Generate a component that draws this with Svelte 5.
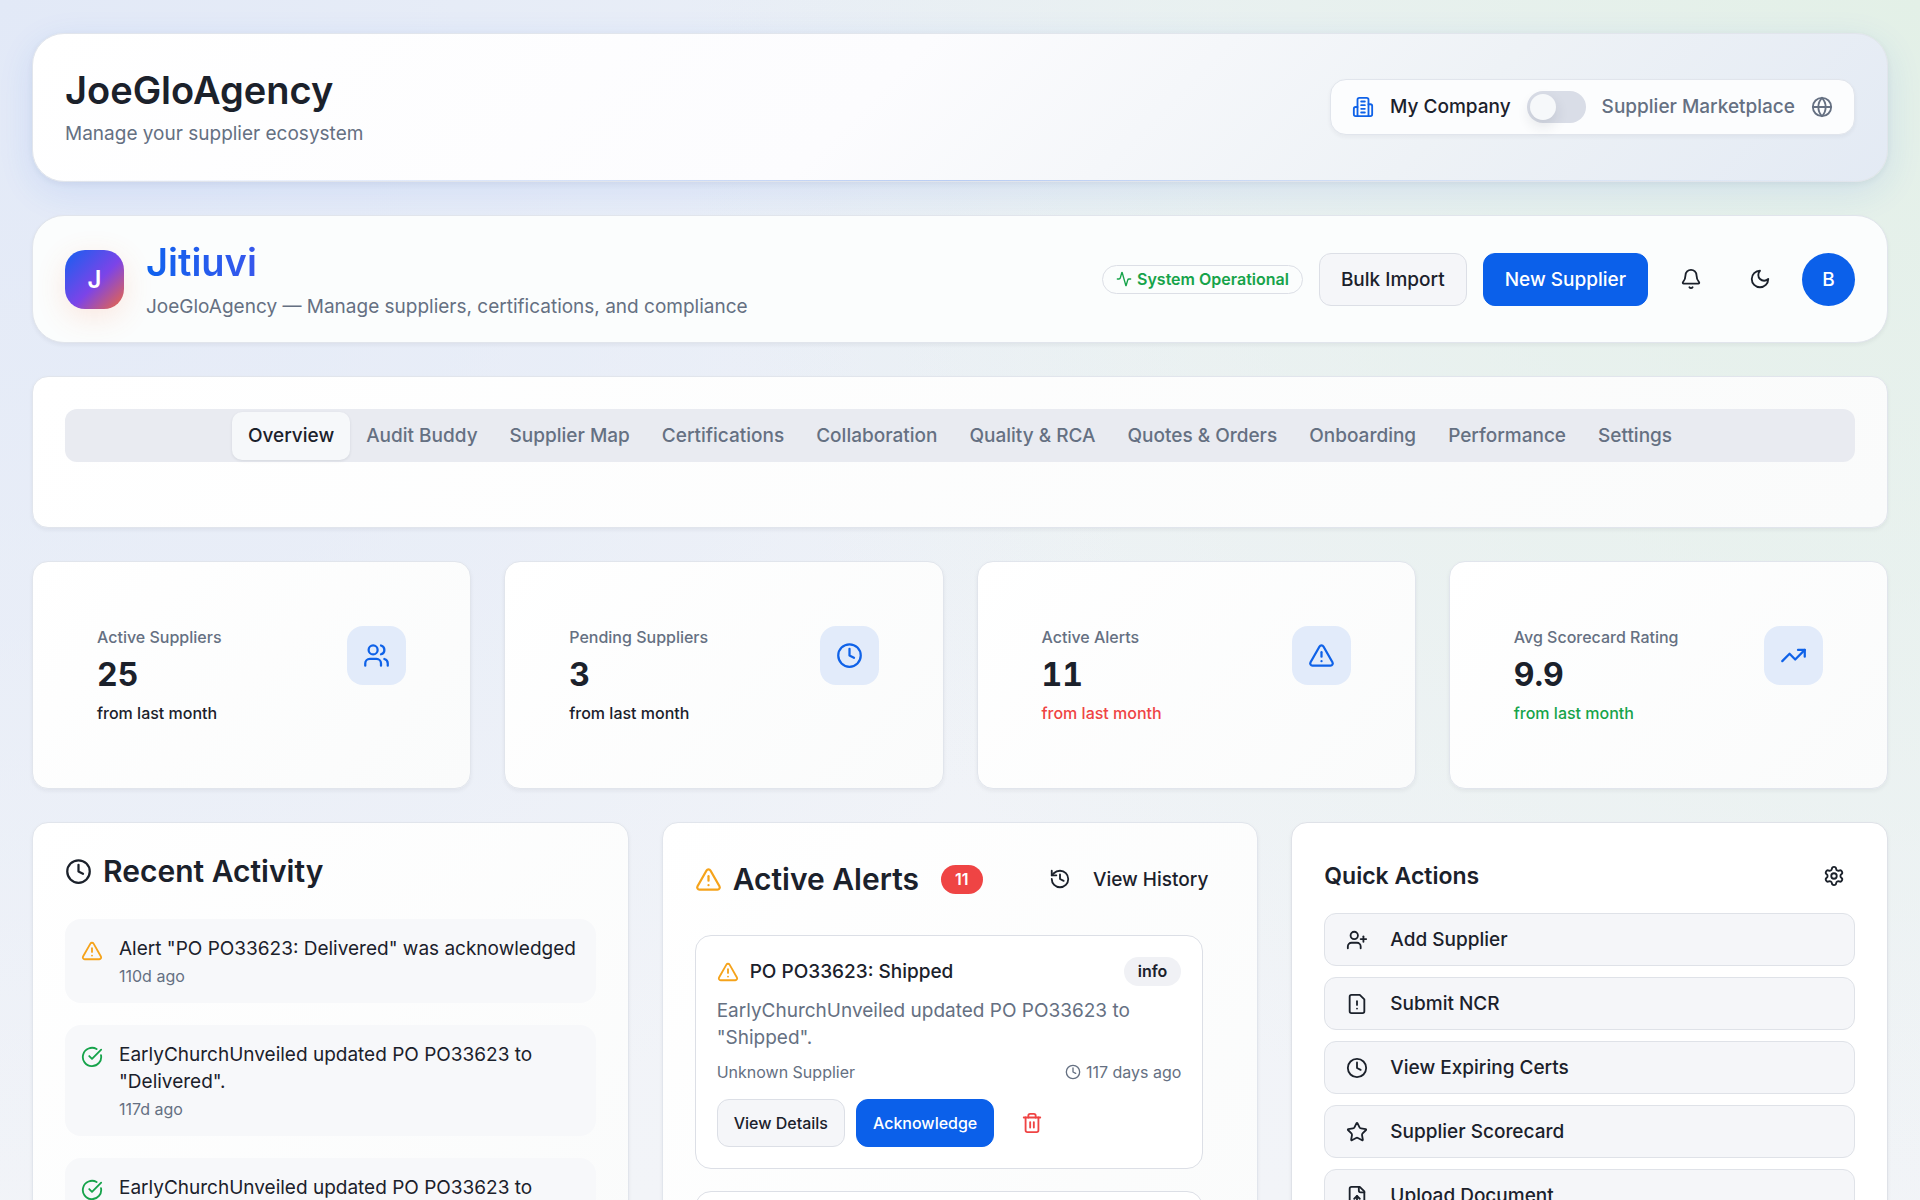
<script>
  const icons = {
    building: [
      'M6 22V4a2 2 0 0 1 2-2h8a2 2 0 0 1 2 2v18Z',
      'M6 12H4a2 2 0 0 0-2 2v6a2 2 0 0 0 2 2h2',
      'M18 9h2a2 2 0 0 1 2 2v9a2 2 0 0 1-2 2h-2',
      'M10 6h4', 'M10 10h4', 'M10 14h4', 'M10 18h4',
    ],
    globe: [
      'M22 12a10 10 0 1 1-20 0a10 10 0 0 1 20 0',
      'M12 2a14.5 14.5 0 0 0 0 20 14.5 14.5 0 0 0 0-20',
      'M2 12h20',
    ],
    activity: [
      'M22 12h-2.48a2 2 0 0 0-1.93 1.46l-2.35 8.36a.25.25 0 0 1-.48 0L9.24 2.18a.25.25 0 0 0-.48 0l-2.35 8.36A2 2 0 0 1 4.49 12H2',
    ],
    bell: [
      'M10.268 21a2 2 0 0 0 3.464 0',
      'M3.262 15.326A1 1 0 0 0 4 17h16a1 1 0 0 0 .74-1.673C19.41 13.956 18 12.499 18 8A6 6 0 0 0 6 8c0 4.499-1.411 5.956-2.738 7.326',
    ],
    moon: ['M12 3a6 6 0 0 0 9 9 9 9 0 1 1-9-9Z'],
    users: [
      'M16 21v-2a4 4 0 0 0-4-4H6a4 4 0 0 0-4 4v2',
      'M13 7a4 4 0 1 1-8 0a4 4 0 0 1 8 0',
      'M22 21v-2a4 4 0 0 0-3-3.87',
      'M16 3.13a4 4 0 0 1 0 7.75',
    ],
    clock: ['M22 12a10 10 0 1 1-20 0a10 10 0 0 1 20 0', 'M12 6v6l4 2'],
    alert: [
      'm21.73 18-8-14a2 2 0 0 0-3.48 0l-8 14A2 2 0 0 0 4 21h16a2 2 0 0 0 1.73-3',
      'M12 9v4', 'M12 17h.01',
    ],
    trending: ['M22 7 13.5 15.5 8.5 10.5 2 17', 'M16 7h6v6'],
    check: ['M21.801 10A10 10 0 1 1 17 3.335', 'm9 11 3 3L22 4'],
    history: [
      'M3 12a9 9 0 1 0 9-9 9.75 9.75 0 0 0-6.74 2.74L3 8',
      'M3 3v5h5', 'M12 7v5l4 2',
    ],
    trash: [
      'M3 6h18',
      'M19 6v14c0 1-1 2-2 2H7c-1 0-2-1-2-2V6',
      'M8 6V4c0-1 1-2 2-2h4c1 0 2 1 2 2v2',
      'M10 11v6', 'M14 11v6',
    ],
    settings: [
      'M9.671 4.136a2.34 2.34 0 0 1 4.659 0 2.34 2.34 0 0 0 3.319 1.915 2.34 2.34 0 0 1 2.33 4.033 2.34 2.34 0 0 0 0 3.831 2.34 2.34 0 0 1-2.33 4.033 2.34 2.34 0 0 0-3.319 1.915 2.34 2.34 0 0 1-4.659 0 2.34 2.34 0 0 0-3.32-1.915 2.34 2.34 0 0 1-2.33-4.033 2.34 2.34 0 0 0 0-3.831A2.34 2.34 0 0 1 6.35 6.051a2.34 2.34 0 0 0 3.319-1.915',
      'M15 12a3 3 0 1 1-6 0a3 3 0 0 1 6 0',
    ],
    userPlus: [
      'M16 21v-2a4 4 0 0 0-4-4H6a4 4 0 0 0-4 4v2',
      'M13 7a4 4 0 1 1-8 0a4 4 0 0 1 8 0',
      'M19 8v6', 'M22 11h-6',
    ],
    fileWarning: [
      'M15 2H6a2 2 0 0 0-2 2v16a2 2 0 0 0 2 2h12a2 2 0 0 0 2-2V7Z',
      'M12 9v4', 'M12 17h.01',
    ],
    star: [
      'M11.525 2.295a.53.53 0 0 1 .95 0l2.31 4.679a2.123 2.123 0 0 0 1.595 1.16l5.166.756a.53.53 0 0 1 .294.904l-3.736 3.638a2.123 2.123 0 0 0-.611 1.878l.882 5.14a.53.53 0 0 1-.771.56l-4.618-2.428a2.122 2.122 0 0 0-1.973 0L6.396 21.01a.53.53 0 0 1-.77-.56l.881-5.139a2.122 2.122 0 0 0-.611-1.879L2.16 9.795a.53.53 0 0 1 .294-.906l5.165-.755a2.122 2.122 0 0 0 1.597-1.16z',
    ],
    fileUp: [
      'M15 2H6a2 2 0 0 0-2 2v16a2 2 0 0 0 2 2h12a2 2 0 0 0 2-2V7Z',
      'M14 2v4a2 2 0 0 0 2 2h4',
      'M12 12v6', 'm15 15-3-3-3 3',
    ],
  };

  const tabs = [
    'Overview', 'Audit Buddy', 'Supplier Map', 'Certifications', 'Collaboration',
    'Quality & RCA', 'Quotes & Orders', 'Onboarding', 'Performance', 'Settings',
  ];

  const stats = [
    { label: 'Active Suppliers', value: '25', tone: 'neutral', icon: 'users' },
    { label: 'Pending Suppliers', value: '3', tone: 'neutral', icon: 'clock' },
    { label: 'Active Alerts', value: '11', tone: 'bad', icon: 'alert' },
    { label: 'Avg Scorecard Rating', value: '9.9', tone: 'good', icon: 'trending' },
  ];

  const activity = [
    { icon: 'alert', text: 'Alert "PO PO33623: Delivered" was acknowledged', time: '110d ago' },
    { icon: 'check', text: 'EarlyChurchUnveiled updated PO PO33623 to "Delivered".', time: '117d ago' },
    { icon: 'check', text: 'EarlyChurchUnveiled updated PO PO33623 to', time: '' },
  ];

  const alerts = [
    {
      title: 'PO PO33623: Shipped',
      text: 'EarlyChurchUnveiled updated PO PO33623 to "Shipped".',
      supplier: 'Unknown Supplier',
      time: '117 days ago',
    },
  ];

  const actions = [
    { icon: 'userPlus', label: 'Add Supplier' },
    { icon: 'fileWarning', label: 'Submit NCR' },
    { icon: 'clock', label: 'View Expiring Certs' },
    { icon: 'star', label: 'Supplier Scorecard' },
    { icon: 'fileUp', label: 'Upload Document' },
  ];

  let activeTab = $state('Overview');
  let marketplace = $state(false);
</script>

{#snippet icon(name, size = 'md')}
  <svg class="icon {size}" viewBox="0 0 24 24" aria-hidden="true">
    {#each icons[name] as d}
      <path {d} />
    {/each}
  </svg>
{/snippet}

<main class="page">
  <header class="card hero">
    <div>
      <h1>JoeGloAgency</h1>
      <p class="muted">Manage your supplier ecosystem</p>
    </div>
    <div class="switcher">
      <span class="blue">{@render icon('building')}</span>
      <label for="mode">My Company</label>
      <input id="mode" class="switch" type="checkbox" role="switch" bind:checked={marketplace} />
      <label for="mode" class="muted">Supplier Marketplace</label>
      <span class="muted">{@render icon('globe')}</span>
    </div>
  </header>

  <section class="card brand">
    <div class="logo">J</div>
    <div class="brand-text">
      <h2 class="brand-name">Jitiuvi</h2>
      <p class="muted">JoeGloAgency — Manage suppliers, certifications, and compliance</p>
    </div>
    <div class="tools">
      <span class="status">{@render icon('activity', 'xs')}System Operational</span>
      <button class="btn">Bulk Import</button>
      <button class="btn primary">New Supplier</button>
      <button class="btn-icon" aria-label="Notifications">{@render icon('bell')}</button>
      <button class="btn-icon" aria-label="Dark mode">{@render icon('moon')}</button>
      <button class="btn-icon avatar">B</button>
    </div>
  </section>

  <nav class="card tabs-card">
    <div class="tabs" role="tablist">
      {#each tabs as tab}
        <button
          class="tab"
          class:active={tab === activeTab}
          role="tab"
          aria-selected={tab === activeTab}
          onclick={() => (activeTab = tab)}>{tab}</button>
      {/each}
    </div>
  </nav>

  <section class="stats">
    {#each stats as stat}
      <div class="card stat">
        <div>
          <p class="stat-label">{stat.label}</p>
          <p class="stat-value">{stat.value}</p>
          <p class="stat-note {stat.tone}">from last month</p>
        </div>
        <div class="stat-icon">{@render icon(stat.icon, 'lg')}</div>
      </div>
    {/each}
  </section>

  <section class="columns">
    <div class="card panel">
      <h2 class="panel-title">{@render icon('clock', 'lg')}Recent Activity</h2>
      <ul class="activity">
        {#each activity as item}
          <li>
            <span class="mark {item.icon}">{@render icon(item.icon)}</span>
            <div>
              <p>{item.text}</p>
              <p class="small muted">{item.time}</p>
            </div>
          </li>
        {/each}
      </ul>
    </div>

    <div class="card panel">
      <div class="panel-head">
        <h2 class="panel-title">
          <span class="mark alert">{@render icon('alert', 'lg')}</span>Active Alerts
          <span class="count">11</span>
        </h2>
        <button class="btn ghost">{@render icon('history')}View History</button>
      </div>
      <div class="alerts">
        {#each alerts as alert}
          <article class="alert-card">
            <div class="alert-head">
              <span class="mark alert">{@render icon('alert')}</span>
              <h3>{alert.title}</h3>
              <span class="tag">info</span>
            </div>
            <p class="muted">{alert.text}</p>
            <div class="meta muted">
              <span>{alert.supplier}</span>
              <span class="when">{@render icon('clock', 'xs')}{alert.time}</span>
            </div>
            <div class="alert-actions">
              <button class="btn compact">View Details</button>
              <button class="btn primary compact">Acknowledge</button>
              <button class="btn-icon danger" aria-label="Delete alert">{@render icon('trash')}</button>
            </div>
          </article>
        {/each}
        <article class="alert-card"></article>
      </div>
    </div>

    <div class="card panel solid">
      <div class="quick-head">
        <h2>Quick Actions</h2>
        <button class="btn-icon gear" aria-label="Configure quick actions">{@render icon('settings')}</button>
      </div>
      <div class="quick">
        {#each actions as action}
          <button class="btn wide">{@render icon(action.icon)}{action.label}</button>
        {/each}
      </div>
    </div>
  </section>
</main>

<style>
  :global(body) {
    margin: 0;
    font-family: Inter, "Liberation Sans", sans-serif;
    font-size: 19px;
    line-height: 27px;
    color: #1b212b;
  }

  .page {
    height: 100vh;
    box-sizing: border-box;
    padding: 33px 32px;
    overflow: hidden;
    display: flex;
    flex-direction: column;
    gap: 33px;
    background:
      radial-gradient(circle at 100% 0, #e3f0e7, rgba(227, 240, 231, 0) 55%),
      radial-gradient(circle at 0 0, #e2e9f7, rgba(226, 233, 247, 0) 55%),
      linear-gradient(180deg, #edf1f7, #f2f4f8);
  }

  .page > * {
    flex-shrink: 0;
  }

  h1, h2, h3, p, ul {
    margin: 0;
    padding: 0;
  }

  h1, h2 {
    font-weight: 600;
  }

  button {
    font: inherit;
    color: inherit;
    cursor: pointer;
  }

  .muted {
    color: #657082;
  }

  .blue {
    color: #0f62e8;
  }

  .icon {
    display: block;
    flex-shrink: 0;
    fill: none;
    stroke: currentColor;
    stroke-width: 2;
    stroke-linecap: round;
    stroke-linejoin: round;
    width: 22px;
    height: 22px;
  }

  .icon.xs {
    width: 16px;
    height: 16px;
  }

  .icon.lg {
    width: 27px;
    height: 27px;
  }

  .card {
    box-sizing: border-box;
    border: 1px solid #e1e5ec;
    border-radius: 16px;
    background: linear-gradient(135deg, #fff, #fafbfb);
    box-shadow: 0 2px 4px rgba(30, 41, 59, 0.06);
  }

  .hero {
    display: flex;
    align-items: center;
    justify-content: space-between;
    padding: 32px 32px 34px;
    border-radius: 32px;
    background:
      linear-gradient(90deg, transparent, #b9cdf3, transparent) bottom / 100% 1px no-repeat,
      linear-gradient(135deg, #fff 0%, #fcfcfe 45%, #eef2f6 75%, #e3eaf4 100%);
    box-shadow: 0 10px 36px rgba(37, 99, 235, 0.11), 0 2px 6px rgba(30, 41, 59, 0.06);
  }

  h1 {
    font-size: 38px;
    line-height: 48px;
    margin-bottom: 6px;
  }

  .switcher {
    display: flex;
    align-items: center;
    gap: 16px;
    padding: 11px 21px;
    border: 1px solid #e1e5ec;
    border-radius: 16px;
    background: #fcfdfe;
    box-shadow: 0 2px 4px rgba(30, 41, 59, 0.05);
    font-weight: 500;
  }

  .switch {
    appearance: none;
    margin: 0;
    width: 59px;
    height: 32px;
    padding: 3px;
    box-sizing: border-box;
    border-radius: 16px;
    background: #d9dde7;
    cursor: pointer;
  }

  .switch::before {
    content: '';
    display: block;
    width: 26px;
    height: 26px;
    border-radius: 50%;
    background: #f6f8fa;
    box-shadow: 0 6px 14px rgba(30, 41, 59, 0.12);
  }

  .switch:checked::before {
    margin-left: auto;
  }

  .brand {
    display: flex;
    align-items: center;
    gap: 22px;
    padding: 22px 32px;
    border-radius: 32px;
    background: #fbfdfd;
  }

  .logo {
    width: 59px;
    height: 59px;
    border-radius: 20px;
    display: grid;
    place-items: center;
    font-size: 24px;
    font-weight: 600;
    color: #fff;
    background: linear-gradient(135deg, #1560f0, #7c44e8 55%, #f0683c);
    box-shadow: 0 8px 30px rgba(249, 115, 60, 0.16);
  }

  .brand-name {
    font-size: 38px;
    line-height: 48px;
    margin-bottom: 7px;
    color: transparent;
    background: linear-gradient(90deg, #0f62ee, #7c44e8 50%);
    background-clip: text;
  }

  .tools {
    display: flex;
    align-items: center;
    gap: 16px;
    margin-left: auto;
  }

  .status {
    display: flex;
    align-items: center;
    gap: 5px;
    padding: 0 13px;
    border: 1px solid #dcdfe6;
    border-radius: 15px;
    font-size: 16px;
    font-weight: 600;
    color: #16a34a;
  }

  .btn {
    display: flex;
    align-items: center;
    justify-content: center;
    box-sizing: border-box;
    height: 53px;
    padding: 0 21px;
    border: 1px solid #dcdfe6;
    border-radius: 12px;
    background: #f5f6f9;
    font-weight: 500;
  }

  .btn.primary {
    border-color: #0b60ea;
    background: #0b60ea;
    color: #fff;
  }

  .btn.compact {
    height: 48px;
    padding: 0 16px;
    font-size: 16px;
  }

  .btn.ghost {
    gap: 22px;
    padding: 0 16px;
    border-color: transparent;
    background: none;
  }

  .btn.wide {
    justify-content: flex-start;
    gap: 22px;
    border-color: #dfe2e8;
  }

  .btn-icon {
    display: grid;
    place-items: center;
    width: 53px;
    height: 53px;
    padding: 0;
    border: 0;
    border-radius: 12px;
    background: none;
  }

  .avatar {
    border-radius: 50%;
    background: #0b60ea;
    color: #fff;
    font-weight: 500;
  }

  .tabs-card {
    padding: 32px 32px 65px;
  }

  .tabs {
    display: flex;
    align-items: center;
    justify-content: center;
    height: 53px;
    border-radius: 12px;
    background: #e9ebf1;
  }

  .tab {
    height: 48px;
    padding: 0 16px;
    border: 0;
    border-radius: 10px;
    background: none;
    font-weight: 500;
    color: #657082;
  }

  .tab.active {
    background: #f6f8fa;
    color: #1b212b;
    box-shadow: 0 1px 3px rgba(30, 41, 59, 0.1);
  }

  .stats {
    display: grid;
    grid-template-columns: repeat(4, 1fr);
    gap: 33px;
  }

  .stat {
    display: flex;
    align-items: flex-start;
    justify-content: space-between;
    padding: 64px;
  }

  .stat-label, .stat-note {
    font-size: 16px;
    line-height: 22px;
    font-weight: 500;
  }

  .stat-label {
    color: #657082;
  }

  .stat-value {
    margin: 5px 0;
    font-size: 32px;
    line-height: 44px;
    font-weight: 700;
    font-variant-numeric: tabular-nums;
  }

  .good {
    color: #16a34a;
  }

  .bad {
    color: #ef4444;
  }

  .stat-icon {
    display: grid;
    place-items: center;
    width: 59px;
    height: 59px;
    border-radius: 16px;
    background: #e2ebfa;
    color: #0f62e8;
  }

  .columns {
    display: grid;
    grid-template-columns: repeat(3, 1fr);
    gap: 33px;
  }

  .panel {
    min-width: 0;
    padding: 32px;
  }

  .panel.solid {
    background: #fff;
    border-color: #dfe2e8;
  }

  .panel-title {
    display: flex;
    align-items: center;
    gap: 11px;
    font-size: 30px;
    line-height: 32px;
  }

  .activity {
    display: flex;
    flex-direction: column;
    gap: 22px;
    margin-top: 32px;
    list-style: none;
  }

  .activity li {
    display: flex;
    gap: 16px;
    padding: 16px;
    border-radius: 16px;
    background: #f7f8fa;
  }

  .activity .mark {
    margin-top: 5px;
  }

  .small {
    margin-top: 3px;
    min-height: 22px;
    font-size: 16px;
    line-height: 22px;
  }

  .mark.alert {
    color: #f5a31b;
  }

  .mark.check {
    color: #16a34a;
  }

  .panel-head {
    display: flex;
    align-items: center;
    justify-content: space-between;
    height: 48px;
  }

  .count, .tag {
    padding: 0 14px;
    border-radius: 15px;
    font-size: 16px;
    line-height: 29px;
    font-weight: 600;
  }

  .count {
    margin-left: 11px;
    background: #ef4444;
    color: #fff;
  }

  .tag {
    margin-left: auto;
    background: #f0f1f5;
  }

  .alerts {
    display: flex;
    flex-direction: column;
    gap: 22px;
    margin-top: 32px;
    padding-right: 22px;
  }

  .alert-card {
    padding: 21px;
    border: 1px solid #dcdfe6;
    border-radius: 16px;
    background: #fff;
  }

  .alert-head {
    display: flex;
    align-items: center;
    gap: 11px;
    margin-bottom: 11px;
  }

  h3 {
    font-size: 19px;
    font-weight: 500;
  }

  .meta {
    display: flex;
    justify-content: space-between;
    margin: 10px 0 16px;
    font-size: 16px;
    line-height: 22px;
  }

  .when {
    display: flex;
    align-items: center;
    gap: 5px;
  }

  .alert-actions {
    display: flex;
    align-items: center;
    gap: 11px;
  }

  .danger {
    height: 48px;
    color: #ef4444;
  }

  .quick-head {
    display: flex;
    align-items: center;
    justify-content: space-between;
    height: 42px;
    margin-bottom: 16px;
  }

  .quick-head h2 {
    font-size: 23px;
    line-height: 32px;
  }

  .gear {
    width: 42px;
    height: 42px;
  }

  .quick {
    display: flex;
    flex-direction: column;
    gap: 11px;
  }
</style>
